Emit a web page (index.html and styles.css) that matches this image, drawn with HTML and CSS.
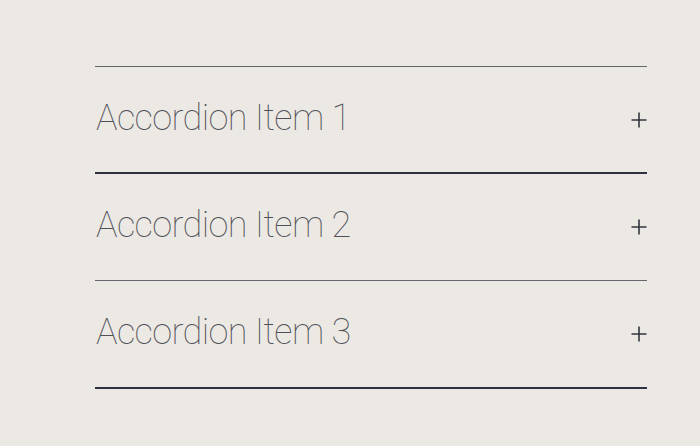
FILE: index.html
```html
<!DOCTYPE html>
<html>
<head>
<meta charset="utf-8">
<link rel="stylesheet" href="styles.css">
</head>
<body>
<div class="accordion">
  <div class="item light-top">
    <span class="title">Accordion Item 1</span>
    <svg class="plus" width="16" height="16" viewBox="0 0 16 16"><path d="M8 0.5V15.5M0.5 8H15.5" stroke="#33353f" stroke-width="1.6" fill="none"/></svg>
  </div>
  <div class="item dark-top tall">
    <span class="title">Accordion Item 2</span>
    <svg class="plus" width="16" height="16" viewBox="0 0 16 16"><path d="M8 0.5V15.5M0.5 8H15.5" stroke="#33353f" stroke-width="1.6" fill="none"/></svg>
  </div>
  <div class="item light-top last tall">
    <span class="title">Accordion Item 3</span>
    <svg class="plus" width="16" height="16" viewBox="0 0 16 16"><path d="M8 0.5V15.5M0.5 8H15.5" stroke="#33353f" stroke-width="1.6" fill="none"/></svg>
  </div>
</div>
</body>
</html>
```
FILE: styles.css
```css
html, body {
  margin: 0;
  padding: 0;
  background: #ece9e4;
}
body {
  padding-top: 66px;
  font-family: Roboto, "Liberation Sans", sans-serif;
}
.accordion {
  margin-left: 95px;
  width: 552px;
}
.item {
  display: flex;
  align-items: center;
  justify-content: space-between;
  height: 105px;
}
.tall {
  height: 106px;
}
.light-top {
  border-top: 1px solid #66666c;
}
.dark-top {
  border-top: 2px solid #2e3140;
}
.last {
  border-bottom: 2px solid #2e3140;
}
.title {
  font-size: 36px;
  font-weight: 100;
  color: #4f5058;
  margin-left: 1px;
  letter-spacing: -0.6px;
  padding-bottom: 4px;
}
.plus {
  margin-right: 0;
}
```
